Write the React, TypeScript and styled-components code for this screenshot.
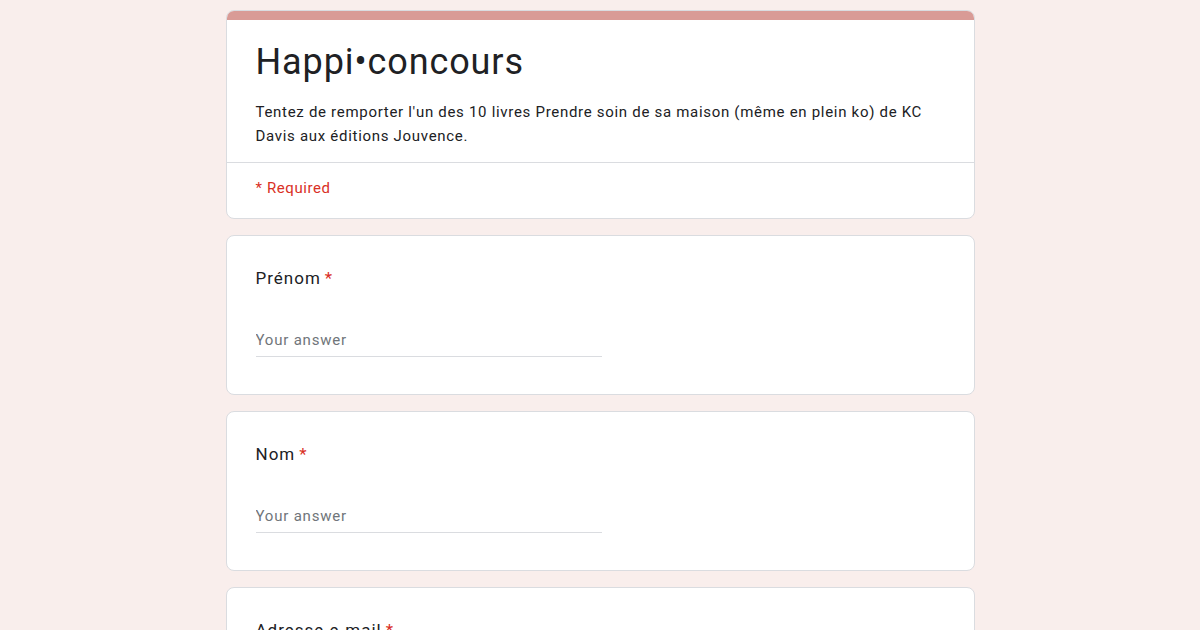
import React from 'react';
import styled, { createGlobalStyle } from 'styled-components';

const GlobalStyle = createGlobalStyle`
  html, body {
    margin: 0;
    padding: 0;
    background: #f9eeec;
    font-family: Roboto, "Liberation Sans", Arial, sans-serif;
    color: #202124;
  }
`;

const Page = styled.div`
  display: flex;
  flex-direction: column;
  align-items: center;
  gap: 16px;
  padding: 10px 0 40px;
`;

const Card = styled.div`
  box-sizing: border-box;
  width: 749px;
  background: #fff;
  border: 1px solid #dadce0;
  border-radius: 8px;
  overflow: hidden;
`;

const Band = styled.div`
  height: 10px;
  background: #d99b96;
  margin: -1px -1px 0;
`;

const HeaderBody = styled.div`
  padding: 18px 29px 14px;
  border-bottom: 1px solid #dadce0;
`;

const Title = styled.h1`
  margin: 0 0 14px;
  font-size: 36px;
  line-height: 48px;
  font-weight: 400;
  letter-spacing: 0.9px;
  color: #202124;
`;

const Description = styled.p`
  margin: 0;
  font-size: 15px;
  line-height: 24px;
  letter-spacing: 0.7px;
  color: #202124;
`;

const RequiredNote = styled.div`
  padding: 13px 29px 18px;
  font-size: 15px;
  line-height: 24px;
  letter-spacing: 0.6px;
  color: #d93025;
`;

const QuestionBody = styled.div`
  padding: 30px 29px 37px;
`;

const Label = styled.div`
  font-size: 17px;
  line-height: 24px;
  letter-spacing: 1px;
  color: #202124;
`;

const Star = styled.span`
  color: #d93025;
  margin-left: 4px;
`;

const AnswerInput = styled.input`
  display: block;
  box-sizing: border-box;
  width: 346px;
  height: 33px;
  margin-top: 34px;
  padding: 0;
  border: none;
  border-bottom: 1px solid #dadce0;
  outline: none;
  font-family: Roboto, "Liberation Sans", Arial, sans-serif;
  font-size: 15px;
  letter-spacing: 0.8px;
  color: #202124;
  background: transparent;
  &::placeholder {
    color: #70757a;
  }
`;

const questions = ['Prénom', 'Nom', 'Adresse e-mail'];

export default function App() {
  return (
    <>
      <GlobalStyle />
      <Page>
        <Card>
          <Band />
          <HeaderBody>
            <Title>Happi•concours</Title>
            <Description>
              Tentez de remporter l'un des 10 livres Prendre soin de sa maison (même en plein ko) de KC
              Davis aux éditions Jouvence.
            </Description>
          </HeaderBody>
          <RequiredNote>* Required</RequiredNote>
        </Card>
        {questions.map((q) => (
          <Card key={q}>
            <QuestionBody>
              <Label>
                {q}
                <Star>*</Star>
              </Label>
              <AnswerInput placeholder="Your answer" />
            </QuestionBody>
          </Card>
        ))}
      </Page>
    </>
  );
}
